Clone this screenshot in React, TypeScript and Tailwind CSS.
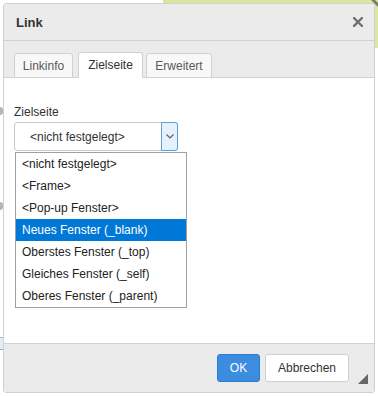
import React from "react";

const font = { fontFamily: '"Liberation Sans", Arial, sans-serif' };

const options = [
  "<nicht festgelegt>",
  "<Frame>",
  "<Pop-up Fenster>",
  "Neues Fenster (_blank)",
  "Oberstes Fenster (_top)",
  "Gleiches Fenster (_self)",
  "Oberes Fenster (_parent)",
];

export default function App() {
  return (
    <div
      className="relative w-[378px] h-[396px] bg-white overflow-hidden text-[12px] text-[#333]"
      style={font}
    >
      {/* background page bits */}
      <div className="absolute left-[163px] top-0 w-[215px] h-[48px] bg-[#dce79c]" />
      <svg className="absolute right-0 top-0" width="8" height="8" viewBox="0 0 8 8">
        <polygon points="1,0 5,0 8,3 8,7" fill="#7a7a7a" />
      </svg>
      <div className="absolute left-0 top-[107px] w-[3px] h-[8px] rounded-r-full bg-[#b5b5b5]" />
      <div className="absolute left-0 top-[202px] w-[3px] h-[8px] rounded-r-full bg-[#b5b5b5]" />
      <div className="absolute left-0 top-[337px] w-[3px] h-[13px] border-y border-[#9fb3c8] bg-[#e4ecf4]" />

      {/* dialog */}
      <div className="absolute left-[3px] top-[3px] w-[372px] h-[390px] flex flex-col border border-[#d1d1d1] rounded-[3px] overflow-hidden bg-white">
        {/* title */}
        <div className="h-[37px] shrink-0 flex items-center justify-between pl-[12px] pr-[11px] bg-[#ebebeb] border-b border-[#d1d1d1]">
          <span className="text-[13px] font-bold text-[#333] pt-[1px]">Link</span>
          <svg width="10" height="10" viewBox="0 0 10 10" className="mb-[1px]">
            <path d="M1 1 L9 9 M9 1 L1 9" stroke="#707070" strokeWidth="2.4" strokeLinecap="square" />
          </svg>
        </div>
        {/* tabs */}
        <div className="h-[37px] shrink-0 flex items-end pl-[10px] bg-[#ebebeb] border-b border-[#d1d1d1]">
          <div className="w-[59px] h-[25px] -mb-px flex items-center justify-center bg-[#f8f8f8] border border-[#d1d1d1] rounded-t-[3px] text-[#595959]">
            Linkinfo
          </div>
          <div className="ml-[5px] w-[65px] h-[26px] -mb-px flex items-center justify-center bg-white border border-[#d1d1d1] border-b-white rounded-t-[3px] text-[#333]">
            Zielseite
          </div>
          <div className="ml-[3px] w-[66px] h-[25px] -mb-px flex items-center justify-center bg-[#f8f8f8] border border-[#d1d1d1] rounded-t-[3px] text-[#595959]">
            Erweitert
          </div>
        </div>
        {/* content */}
        <div className="relative flex-1 bg-white px-[10px] pt-[26px]">
          <div className="leading-[16px]">Zielseite</div>
          <div className="relative mt-[2px] w-[164px] h-[29px] flex items-center border border-[#c9c9c9] rounded-[3px] bg-white">
            <span className="pl-[15px] flex-1">&lt;nicht festgelegt&gt;</span>
            <div className="w-[17px] h-[29px] -my-px -mr-px flex items-center justify-center bg-[#e5f1fb] border border-[#5d9fd9] rounded-r-[3px]">
              <svg width="8" height="5" viewBox="0 0 8 5">
                <polyline points="0.5,0.5 4,4 7.5,0.5" fill="none" stroke="#606060" strokeWidth="1.2" />
              </svg>
            </div>
            {/* dropdown list */}
            <div className="absolute left-0 top-[29px] w-[172px] border border-[#a0a0a0] bg-white">
              {options.map((o, i) => (
                <div
                  key={o}
                  className={
                    "h-[22px] flex items-center pl-[6px] whitespace-nowrap " +
                    (i === 3 ? "bg-[#0078d7] text-white" : "text-[#222]")
                  }
                >
                  {o}
                </div>
              ))}
            </div>
          </div>
        </div>
        {/* footer */}
        <div className="relative h-[49px] shrink-0 flex items-start justify-end pt-[10px] pr-[25px] bg-[#ebebeb] border-t border-[#d1d1d1]">
          <button className="h-[28px] w-[43px] flex items-center justify-center rounded-[3px] bg-[#3c8ddf] border border-[#2f7ccc] text-white text-[12px]">
            OK
          </button>
          <button className="ml-[5px] h-[28px] w-[84px] flex items-center justify-center rounded-[3px] bg-white border border-[#d1d1d1] text-[#333] text-[12px]">
            Abbrechen
          </button>
          <svg className="absolute right-[6px] bottom-[8px]" width="10" height="10" viewBox="0 0 10 10">
            <polygon points="10,0 10,10 0,10" fill="#666" />
          </svg>
        </div>
      </div>
    </div>
  );
}
